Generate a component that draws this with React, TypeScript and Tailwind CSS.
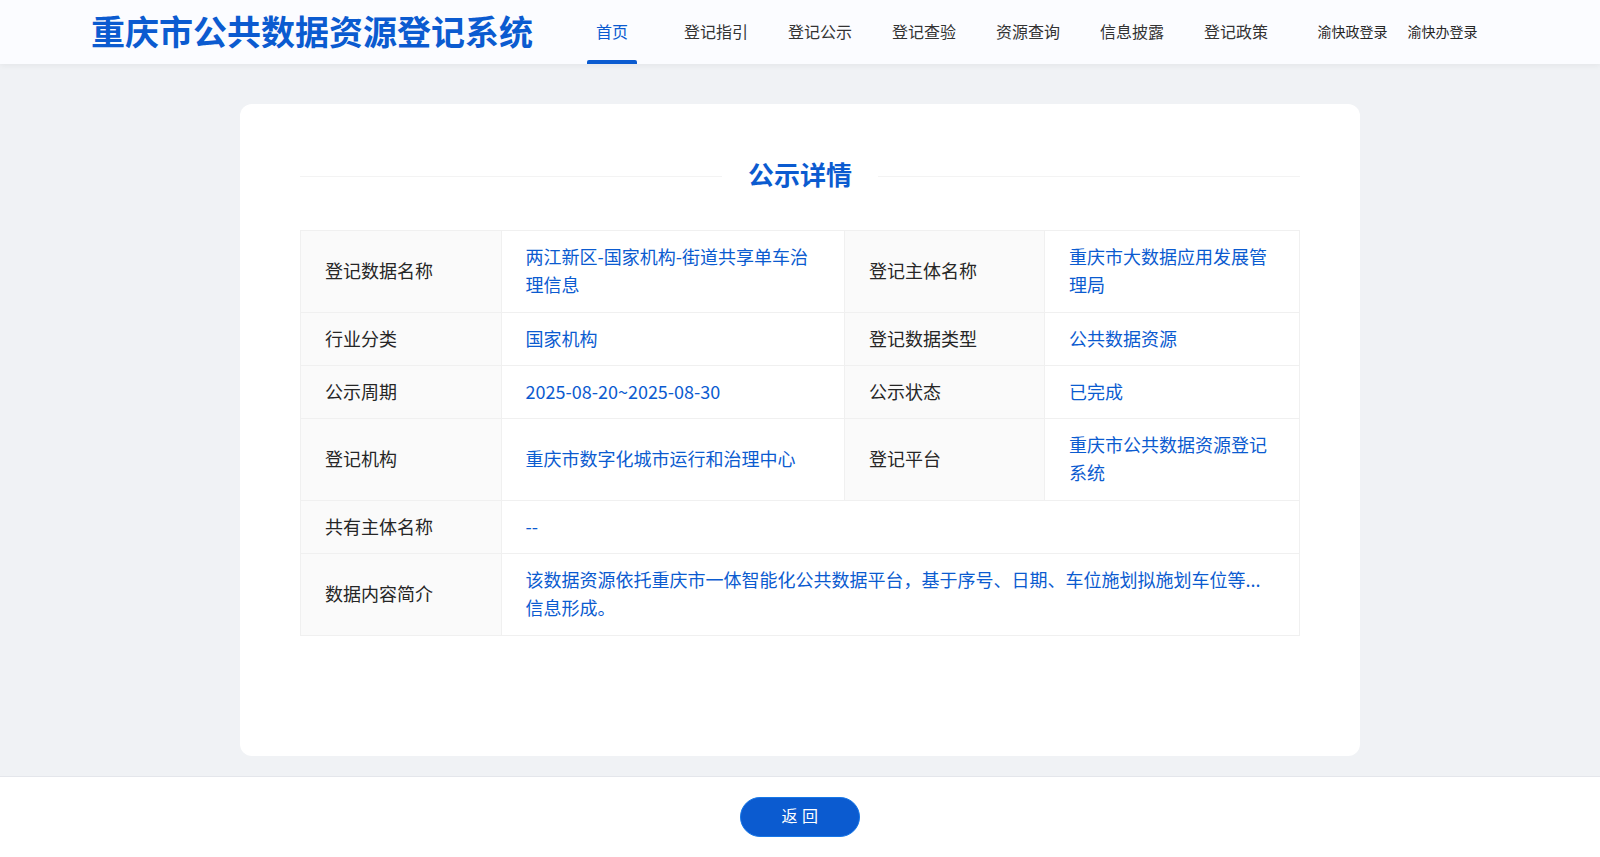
const NAV = ["首页", "登记指引", "登记公示", "登记查验", "资源查询", "信息披露", "登记政策"];

const th = "border border-[#f0f0f0] bg-[#fafafa] px-6 pt-[11px] pb-[13px] text-left font-normal text-[#262626]";
const td = "border border-[#f0f0f0] pt-[11px] pr-6 pb-[13px] pl-[23.5px] text-left text-[#0b5bd0]";
const tdLast = "border border-[#f0f0f0] pt-[11px] pr-6 pb-[13px] pl-6 text-left text-[#0b5bd0]";

export default function App() {
  return (
    <div className="flex h-[857px] flex-col overflow-hidden bg-[#f0f2f5] font-['Noto_Sans_CJK_SC','Noto_Sans',sans-serif]">
      <header className="relative z-10 flex h-16 shrink-0 items-center bg-[#fbfcff] pl-[91px] shadow-[0_2px_6px_rgba(0,0,0,0.05)]">
        <h1 className="mb-0.5 w-[469px] text-[34px] leading-none font-bold whitespace-nowrap text-[#0b5bd0]">重庆市公共数据资源登记系统</h1>
        <nav className="flex h-full">
          {NAV.map((n, i) => (
            <a key={n} className={`relative flex h-full w-[104px] items-center justify-center pb-0.5 text-base ${i === 0 ? "text-[#0b5bd0]" : "text-[#333]"}`}>
              {n}
              {i === 0 && <span className="absolute bottom-0 left-[27px] h-1 w-[50px] rounded-t-[2px] bg-[#0b5bd0]" />}
            </a>
          ))}
        </nav>
        <div className="mb-0.5 ml-[29.5px] flex gap-5 text-sm text-[#262626]">
          <a>渝快政登录</a>
          <a>渝快办登录</a>
        </div>
      </header>

      <main className="flex-1 pt-10">
        <div className="mx-auto h-[652px] w-[1120px] rounded-xl bg-white px-[60px] pt-10">
          <div className="flex h-[64px] items-center">
            <div className="h-px flex-1 bg-[#f3f3f3]" />
            <h2 className="mb-1 px-[26px] text-[26px] leading-none font-bold text-[#0b5bd0]">公示详情</h2>
            <div className="h-px flex-1 bg-[#f3f3f3]" />
          </div>
          <table className="mt-[22px] w-[999px] table-fixed border-collapse text-lg leading-[1.5714]">
            <colgroup>
              <col className="w-[201px]" />
              <col className="w-[343px]" />
              <col className="w-[200px]" />
              <col className="w-[255px]" />
            </colgroup>
            <tbody>
              <tr>
                <th className={th}>登记数据名称</th>
                <td className={td}>两江新区-国家机构-街道共享单车治理信息</td>
                <th className={th}>登记主体名称</th>
                <td className={tdLast}>重庆市大数据应用发展管理局</td>
              </tr>
              <tr>
                <th className={th}>行业分类</th>
                <td className={td}>国家机构</td>
                <th className={th}>登记数据类型</th>
                <td className={tdLast}>公共数据资源</td>
              </tr>
              <tr>
                <th className={th}>公示周期</th>
                <td className={td}>2025-08-20~2025-08-30</td>
                <th className={th}>公示状态</th>
                <td className={tdLast}>已完成</td>
              </tr>
              <tr>
                <th className={th}>登记机构</th>
                <td className={td}>重庆市数字化城市运行和治理中心</td>
                <th className={th}>登记平台</th>
                <td className={tdLast}>重庆市公共数据资源登记系统</td>
              </tr>
              <tr>
                <th className={th}>共有主体名称</th>
                <td className={td} colSpan={3}>--</td>
              </tr>
              <tr>
                <th className={th}>数据内容简介</th>
                <td className={td} colSpan={3}>
                  该数据资源依托重庆市一体智能化公共数据平台，基于序号、日期、车位施划拟施划车位等...
                  <br />
                  信息形成。
                </td>
              </tr>
            </tbody>
          </table>
        </div>
      </main>

      <footer className="flex h-[81px] shrink-0 items-center justify-center border-t border-[#e4e6eb] bg-white">
        <button className="h-10 w-[120px] rounded-full border border-[#1677e8] bg-[#0b5bd0] pb-1 text-base tracking-[0.5px] text-white">返 回</button>
      </footer>
    </div>
  );
}
